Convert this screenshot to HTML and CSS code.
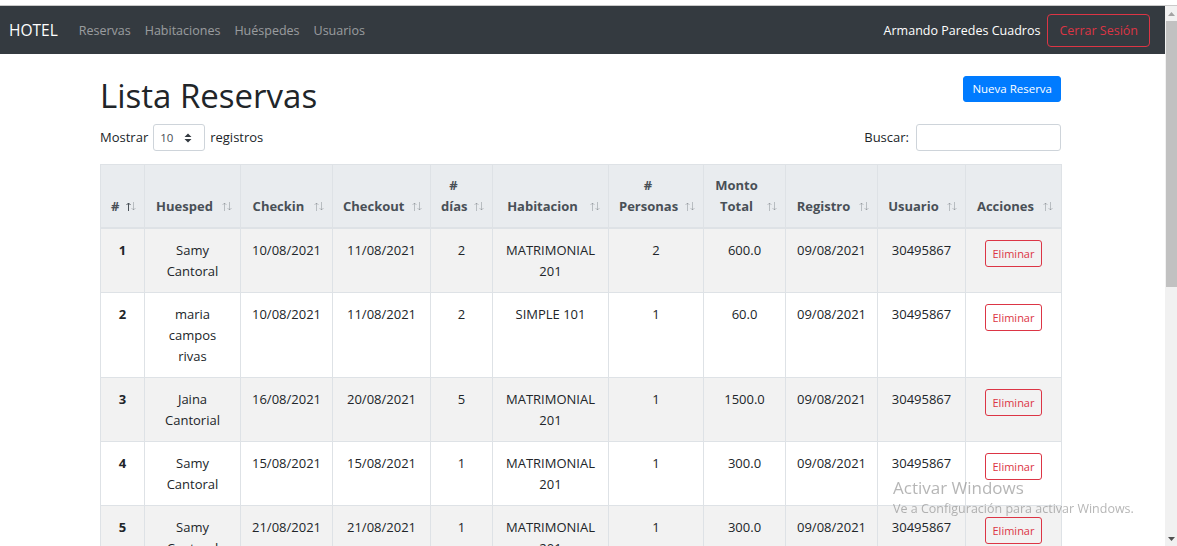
FILE: index.html
```html
<!DOCTYPE html>
<html lang="es">
<head>
<meta charset="utf-8">
<title>Lista Reservas</title>
<link rel="stylesheet" href="styles.css">
</head>
<body>
<div class="screen">
  <div class="topedge"></div>
  <div class="frame">
    <div class="page">
      <nav class="navbar">
        <a class="brand" href="#">HOTEL</a>
        <ul class="nav-links">
          <li><a href="#">Reservas</a></li>
          <li><a href="#">Habitaciones</a></li>
          <li><a href="#">Huéspedes</a></li>
          <li><a href="#">Usuarios</a></li>
        </ul>
        <div class="nav-right">
          <span class="user">Armando Paredes Cuadros</span>
          <button class="btn-logout">Cerrar Sesión</button>
        </div>
      </nav>

      <main class="container">
        <div class="title-row">
          <h1>Lista Reservas</h1>
          <button class="btn-new">Nueva Reserva</button>
        </div>

        <div class="controls">
          <div class="length">
            <span>Mostrar</span>
            <div class="select"><span>10</span>
              <svg class="select-caret" width="8" height="10" viewBox="0 0 8 10"><path d="M4 0.5L7.5 4H0.5Z M4 9.5L7.5 6H0.5Z" fill="#343a40"/></svg>
            </div>
            <span>registros</span>
          </div>
          <label class="search">
            <span>Buscar:</span>
            <input type="text">
          </label>
        </div>

        <table class="table">
          <colgroup>
            <col class="c-id"><col class="c-huesped"><col class="c-date"><col class="c-date2"><col class="c-dias"><col class="c-hab"><col class="c-pers"><col class="c-monto"><col class="c-reg"><col class="c-user"><col class="c-act">
          </colgroup>
          <thead>
            <tr>
              <th class="sorted"># <svg class="sort" width="10" height="9" viewBox="0 0 10 9"><path class="up" d="M2.5 9V1M0.5 3L2.5 1L4.5 3"/><path class="down" d="M7.5 0V8M5.5 6L7.5 8L9.5 6"/></svg></th>
              <th>Huesped <svg class="sort" width="10" height="9" viewBox="0 0 10 9"><path class="up" d="M2.5 9V1M0.5 3L2.5 1L4.5 3"/><path class="down" d="M7.5 0V8M5.5 6L7.5 8L9.5 6"/></svg></th>
              <th>Checkin <svg class="sort" width="10" height="9" viewBox="0 0 10 9"><path class="up" d="M2.5 9V1M0.5 3L2.5 1L4.5 3"/><path class="down" d="M7.5 0V8M5.5 6L7.5 8L9.5 6"/></svg></th>
              <th>Checkout <svg class="sort" width="10" height="9" viewBox="0 0 10 9"><path class="up" d="M2.5 9V1M0.5 3L2.5 1L4.5 3"/><path class="down" d="M7.5 0V8M5.5 6L7.5 8L9.5 6"/></svg></th>
              <th># días <svg class="sort" width="10" height="9" viewBox="0 0 10 9"><path class="up" d="M2.5 9V1M0.5 3L2.5 1L4.5 3"/><path class="down" d="M7.5 0V8M5.5 6L7.5 8L9.5 6"/></svg></th>
              <th>Habitacion <svg class="sort" width="10" height="9" viewBox="0 0 10 9"><path class="up" d="M2.5 9V1M0.5 3L2.5 1L4.5 3"/><path class="down" d="M7.5 0V8M5.5 6L7.5 8L9.5 6"/></svg></th>
              <th># Personas <svg class="sort" width="10" height="9" viewBox="0 0 10 9"><path class="up" d="M2.5 9V1M0.5 3L2.5 1L4.5 3"/><path class="down" d="M7.5 0V8M5.5 6L7.5 8L9.5 6"/></svg></th>
              <th>Monto Total <svg class="sort" width="10" height="9" viewBox="0 0 10 9"><path class="up" d="M2.5 9V1M0.5 3L2.5 1L4.5 3"/><path class="down" d="M7.5 0V8M5.5 6L7.5 8L9.5 6"/></svg></th>
              <th>Registro <svg class="sort" width="10" height="9" viewBox="0 0 10 9"><path class="up" d="M2.5 9V1M0.5 3L2.5 1L4.5 3"/><path class="down" d="M7.5 0V8M5.5 6L7.5 8L9.5 6"/></svg></th>
              <th>Usuario <svg class="sort" width="10" height="9" viewBox="0 0 10 9"><path class="up" d="M2.5 9V1M0.5 3L2.5 1L4.5 3"/><path class="down" d="M7.5 0V8M5.5 6L7.5 8L9.5 6"/></svg></th>
              <th>Acciones <svg class="sort" width="10" height="9" viewBox="0 0 10 9"><path class="up" d="M2.5 9V1M0.5 3L2.5 1L4.5 3"/><path class="down" d="M7.5 0V8M5.5 6L7.5 8L9.5 6"/></svg></th>
            </tr>
          </thead>
          <tbody>
            <tr>
              <td class="num">1</td><td>Samy Cantoral</td><td>10/08/2021</td><td>11/08/2021</td><td>2</td><td>MATRIMONIAL 201</td><td>2</td><td>600.0</td><td>09/08/2021</td><td>30495867</td><td><button class="btn-del">Eliminar</button></td>
            </tr>
            <tr>
              <td class="num">2</td><td>maria campos rivas</td><td>10/08/2021</td><td>11/08/2021</td><td>2</td><td>SIMPLE 101</td><td>1</td><td>60.0</td><td>09/08/2021</td><td>30495867</td><td><button class="btn-del">Eliminar</button></td>
            </tr>
            <tr>
              <td class="num">3</td><td>Jaina Cantorial</td><td>16/08/2021</td><td>20/08/2021</td><td>5</td><td>MATRIMONIAL 201</td><td>1</td><td>1500.0</td><td>09/08/2021</td><td>30495867</td><td><button class="btn-del">Eliminar</button></td>
            </tr>
            <tr>
              <td class="num">4</td><td>Samy Cantoral</td><td>15/08/2021</td><td>15/08/2021</td><td>1</td><td>MATRIMONIAL 201</td><td>1</td><td>300.0</td><td>09/08/2021</td><td>30495867</td><td><button class="btn-del">Eliminar</button></td>
            </tr>
            <tr>
              <td class="num">5</td><td>Samy Cantoral</td><td>21/08/2021</td><td>21/08/2021</td><td>1</td><td>MATRIMONIAL 201</td><td>1</td><td>300.0</td><td>09/08/2021</td><td>30495867</td><td><button class="btn-del">Eliminar</button></td>
            </tr>
          </tbody>
        </table>
      </main>
    </div>

    <div class="scrollbar">
      <div class="sb-arrow"><svg width="7" height="4" viewBox="0 0 7 4"><path d="M3.5 0L7 4H0Z" fill="#a3a3a3"/></svg></div>
      <div class="sb-thumb"></div>
      <div class="sb-track"></div>
      <div class="sb-arrow"><svg width="7" height="4" viewBox="0 0 7 4"><path d="M0 0H7L3.5 4Z" fill="#505050"/></svg></div>
    </div>
  </div>

  <div class="watermark">
    <div class="wm-title">Activar Windows</div>
    <div class="wm-sub">Ve a Configuración para activar Windows.</div>
  </div>
</div>
</body>
</html>
```

FILE: styles.css
```css
* { box-sizing: border-box; }

html, body {
  margin: 0;
  height: 100%;
  overflow: hidden;
}

body {
  font-family: "Open Sans", "Noto Sans", sans-serif;
  font-size: 13px;
  line-height: 21px;
  color: #212529;
  background: #fff;
}

.screen {
  height: 100%;
  display: flex;
  flex-direction: column;
}

.topedge {
  flex: none;
  height: 6px;
  background: #fff;
  border-bottom: 1px solid #c9c9c9;
}

.frame {
  flex: 1;
  min-height: 0;
  display: flex;
}

.page {
  flex: 1;
  min-width: 0;
  overflow: hidden;
}

/* scrollbar */
.scrollbar {
  flex: none;
  width: 12px;
  background: #f1f1f1;
  display: flex;
  flex-direction: column;
}

.sb-arrow {
  flex: none;
  height: 15px;
  display: flex;
  align-items: center;
  justify-content: center;
}

.sb-thumb {
  flex: none;
  height: 266px;
  margin-left: 1px;
  background: #c1c1c1;
}

.sb-track { flex: 1; }

/* navbar */
.navbar {
  height: 48px;
  background: #343a40;
  display: flex;
  align-items: center;
  padding: 0 15px 0 9px;
}

.brand {
  color: #fff;
  font-size: 15.5px;
  text-decoration: none;
  margin-right: 14px;
}

.nav-links {
  display: flex;
  list-style: none;
  margin: 0;
  padding: 0;
}

.nav-links a {
  display: block;
  padding: 0 7px;
  color: rgba(255, 255, 255, 0.5);
  font-size: 12.5px;
  text-decoration: none;
}

.nav-right {
  margin-left: auto;
  display: flex;
  align-items: center;
  gap: 7px;
}

.user {
  color: #fff;
  font-size: 12.5px;
}

.btn-logout {
  height: 33px;
  padding: 0 11px;
  border: 1px solid #dc3545;
  border-radius: 4px;
  background: transparent;
  color: #dc3545;
  font-family: inherit;
  font-size: 12.5px;
}

/* content */
.container {
  width: 961px;
  margin-left: 100px;
  padding-top: 22px;
}

.title-row {
  display: flex;
  justify-content: space-between;
  align-items: flex-start;
}

h1 {
  margin: 0;
  font-size: 33px;
  line-height: 40px;
  font-weight: 500;
  color: #212529;
}

.btn-new {
  height: 26px;
  padding: 0 8px;
  border: 1px solid #007bff;
  border-radius: 3px;
  background: #007bff;
  color: #fff;
  font-family: inherit;
  font-size: 11.5px;
  line-height: 24px;
}

.controls {
  margin-top: 8px;
  height: 27px;
  display: flex;
  justify-content: space-between;
  align-items: center;
}

.length, .search {
  display: flex;
  align-items: center;
  gap: 5px;
}

.search { gap: 7px; }

.select {
  width: 52px;
  height: 27px;
  border: 1px solid #ced4da;
  border-radius: 3px;
  display: flex;
  align-items: center;
  justify-content: space-between;
  padding: 0 12px 0 6px;
  font-size: 11.5px;
  color: #495057;
}

.search input {
  width: 145px;
  height: 27px;
  margin: 0;
  border: 1px solid #ced4da;
  border-radius: 3px;
  font-family: inherit;
}

/* table */
.table {
  width: 961px;
  margin-top: 13px;
  border-collapse: collapse;
  table-layout: fixed;
}

.c-id { width: 44px; }
.c-huesped { width: 96px; }
.c-date { width: 92px; }
.c-date2 { width: 98px; }
.c-dias { width: 62px; }
.c-hab { width: 116px; }
.c-pers { width: 95px; }
.c-monto { width: 82px; }
.c-reg { width: 92px; }
.c-user { width: 88px; }
.c-act { width: 96px; }

.table th, .table td {
  border: 1px solid #dee2e6;
  padding: 10.5px 10px;
  text-align: center;
}

.table thead th {
  position: relative;
  background: #e9ecef;
  color: #495057;
  font-weight: 700;
  vertical-align: bottom;
  border-bottom: 2px solid #dee2e6;
  padding: 10px 26px 10px 10px;
}

.sort {
  position: absolute;
  right: 8px;
  bottom: 16px;
  fill: none;
  stroke: #495057;
  stroke-width: 1;
}

.sort path { opacity: 0.3; }
.sorted .sort .up { opacity: 1; }

.table tbody td { vertical-align: top; }
.table tbody tr:nth-child(odd) { background: #f2f2f2; }
.table tbody .num { font-weight: 700; }

.btn-del {
  display: inline-block;
  vertical-align: top;
  margin: 0;
  padding: 4px 7px;
  border: 1px solid #dc3545;
  border-radius: 3px;
  background: transparent;
  color: #dc3545;
  font-family: inherit;
  font-size: 11px;
  line-height: 17px;
}

/* windows activation watermark overlay */
.watermark {
  position: fixed;
  left: 893px;
  top: 476px;
  color: rgba(110, 110, 110, 0.5);
  pointer-events: none;
}

.wm-title {
  font-size: 17px;
  line-height: 24px;
}

.wm-sub {
  font-size: 12.5px;
  line-height: 18px;
}
```
